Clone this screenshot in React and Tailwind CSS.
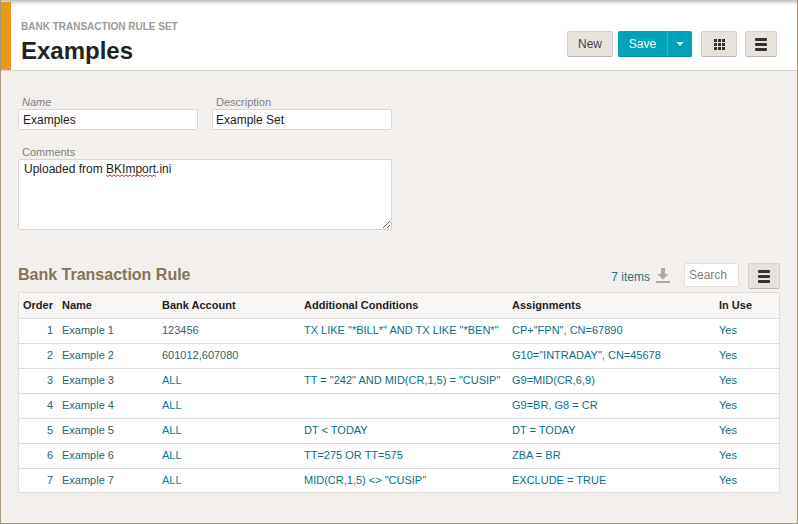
import React from 'react';

const rows = [
  { order: 1, name: 'Example 1', account: '123456', conditions: 'TX LIKE "*BILL*" AND TX LIKE "*BEN*"', assignments: 'CP+"FPN", CN=67890' },
  { order: 2, name: 'Example 2', account: '601012,607080', conditions: '', assignments: 'G10="INTRADAY", CN=45678' },
  { order: 3, name: 'Example 3', account: 'ALL', conditions: 'TT = "242" AND MID(CR,1,5) = "CUSIP"', assignments: 'G9=MID(CR,6,9)' },
  { order: 4, name: 'Example 4', account: 'ALL', conditions: '', assignments: 'G9=BR, G8 = CR' },
  { order: 5, name: 'Example 5', account: 'ALL', conditions: 'DT < TODAY', assignments: 'DT = TODAY' },
  { order: 6, name: 'Example 6', account: 'ALL', conditions: 'TT=275 OR TT=575', assignments: 'ZBA = BR' },
  { order: 7, name: 'Example 7', account: 'ALL', conditions: 'MID(CR,1,5) <> "CUSIP"', assignments: 'EXCLUDE = TRUE' },
];

const MenuIcon = () => (
  <svg width="13" height="13" viewBox="0 0 13 13" fill="#333">
    <rect x="0" y="0" width="12" height="3" rx="1" />
    <rect x="0" y="5" width="12" height="3" rx="1" />
    <rect x="0" y="10" width="12" height="3" rx="1" />
  </svg>
);

const GridIcon = () => (
  <svg width="11" height="11" viewBox="0 0 11 11" fill="#333">
    {[0, 4, 8].map((y) =>
      [0, 4, 8].map((x) => <rect key={`${x}-${y}`} x={x} y={y} width="3" height="3" />)
    )}
  </svg>
);

const Squiggle = () => (
  <svg width="50" height="3" viewBox="0 0 50 3" fill="none" stroke="#e8202e" strokeWidth="1">
    <path d="M0 1 L2 2.5 L4 1 L6 2.5 L8 1 L10 2.5 L12 1 L14 2.5 L16 1 L18 2.5 L20 1 L22 2.5 L24 1 L26 2.5 L28 1 L30 2.5 L32 1 L34 2.5 L36 1 L38 2.5 L40 1 L42 2.5 L44 1 L46 2.5 L48 1 L50 2.5" />
  </svg>
);

const toolBtn = 'flex items-center justify-center h-[26px] rounded-[2px] bg-[#e8e2dc] border border-[#d6d0ca] border-b-[#bdb7b0]';

const App = () => {
  return (
    <div className="w-[798px] h-[524px] overflow-hidden bg-[#f3efec] border-l border-r border-b border-[#a8957c] text-[12px] text-[#222] font-['Liberation_Sans',Arial,sans-serif]">
      <div className="flex h-[71px] bg-white border-b border-[#d5d2ce] bg-[linear-gradient(#bdbdbd,#f4f4f4_4px,#ffffff_6px)]">
        <div className="w-[10px] mt-[2px] bg-[#e9981a]" />
        <div className="pl-[10px] pt-[20px] flex-1">
          <div className="text-[10px] leading-[13px] font-bold text-[#9a9a9a]">BANK TRANSACTION RULE SET</div>
          <h1 className="mt-[4px] text-[24px] leading-[28px] font-bold text-[#222]">Examples</h1>
        </div>
        <div className="flex items-start pt-[31px] pr-[20px]">
          <button className={`${toolBtn} w-[46px] text-[#444]`}>New</button>
          <div className="flex h-[26px] ml-[5px] rounded-[2px] bg-[#00a2b8] border-b border-[#008a9e] text-white">
            <button className="w-[49px] text-center">Save</button>
            <button className="flex items-center justify-center w-[25px] border-l border-[#2cb3c6]">
              <span className="w-0 h-0 mt-[1px] border-x-[4px] border-x-transparent border-t-[4px] border-t-[#d5f0f4]" />
            </button>
          </div>
          <button className={`${toolBtn} w-[36px] ml-[9px]`}><GridIcon /></button>
          <button className={`${toolBtn} w-[32px] ml-[8px]`}><MenuIcon /></button>
        </div>
      </div>

      <div className="pl-[17px] pr-[17px]">
        <div className="flex gap-[14px] pt-[24px]">
          <label className="block w-[180px]">
            <span className="block pl-[4px] leading-[14px] text-[11px] italic text-[#808080]">Name</span>
            <input readOnly defaultValue="Examples" className="block w-full h-[21px] px-[4px] bg-white border border-[#d8d5d2] rounded-[2px] text-[#222] outline-none" />
          </label>
          <label className="block w-[180px]">
            <span className="block pl-[4px] leading-[14px] text-[11px] text-[#808080]">Description</span>
            <input readOnly defaultValue="Example Set" className="block w-full h-[21px] px-[3px] bg-white border border-[#d8d5d2] rounded-[2px] text-[#222] outline-none" />
          </label>
        </div>

        <label className="block w-[374px] mt-[15px]">
          <span className="block pl-[4px] leading-[14px] text-[11px] text-[#808080]">Comments</span>
          <span className="relative block">
            <textarea readOnly spellCheck={false} defaultValue="Uploaded from BKImport.ini" className="block w-full h-[71px] px-[5px] py-[2px] leading-[15px] bg-white border border-[#d8d5d2] rounded-[2px] text-[#222] outline-none" />
            <span className="absolute left-[88px] top-[15px] leading-[0]"><Squiggle /></span>
          </span>
        </label>

        <div className="flex items-start h-[28px] mt-[33px]">
          <h2 className="text-[16px] font-bold text-[#85735a]">Bank Transaction Rule</h2>
          <span className="ml-auto mt-[5px] text-[#2f6f7e]">7 items</span>
          <svg className="ml-[6px] mt-[4px]" width="14" height="16" viewBox="0 0 14 16" fill="#aaa">
            <path d="M5 1h4v6h3.500L7 12.500 1.500 7H5z" />
            <rect x="0" y="14" width="14" height="2" />
          </svg>
          <div className="flex items-center w-[55px] h-[24px] ml-[14px] px-[4px] bg-white border border-[#e2dedb] rounded-[2px] text-[#808080]">Search</div>
          <button className={`${toolBtn} w-[32px] ml-[9px]`}><MenuIcon /></button>
        </div>

        <div className="mt-[1px] w-[762px] bg-white border border-[#e0dcd8] rounded-[2px]">
          <table className="w-full table-fixed border-collapse text-[11px]">
            <thead>
              <tr className="h-[25px] bg-[#f8f6f5] border-b border-[#dcdcdc] text-left font-bold text-[#222]">
                <th className="w-[34px] text-right font-bold">Order</th>
                <th className="w-[101px] pl-[9px] font-bold">Name</th>
                <th className="w-[142px] pl-[8px] font-bold">Bank Account</th>
                <th className="w-[208px] pl-[8px] font-bold">Additional Conditions</th>
                <th className="w-[207px] pl-[8px] font-bold">Assignments</th>
                <th className="pl-[8px] font-bold">In Use</th>
              </tr>
            </thead>
            <tbody>
              {rows.map((row) => (
                <tr key={row.order} className="h-[25px] last:h-[24px] border-b border-[#dcdcdc] last:border-b-0 text-[#0b6f82]">
                  <td className="text-right text-[#31626e]">{row.order}</td>
                  <td className="pl-[9px] text-[#31626e]">{row.name}</td>
                  <td className={row.account === 'ALL' ? 'pl-[8px] text-[#007f99]' : 'pl-[8px] text-[#31626e]'}>{row.account}</td>
                  <td className="pl-[8px]">{row.conditions}</td>
                  <td className="pl-[8px]">{row.assignments}</td>
                  <td className="pl-[8px]">Yes</td>
                </tr>
              ))}
            </tbody>
          </table>
        </div>
      </div>
    </div>
  );
};

export default App;
